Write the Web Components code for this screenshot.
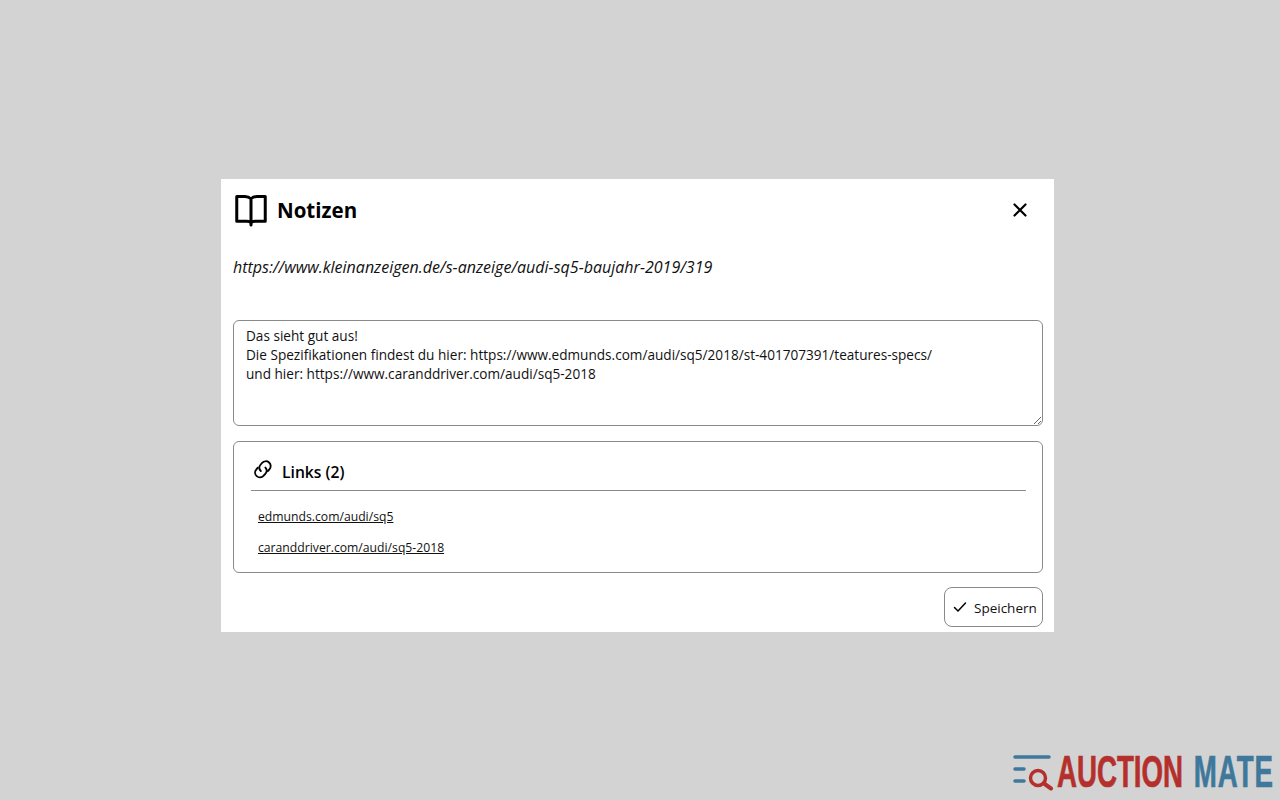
<!DOCTYPE html>
<html lang="de">
<head>
<meta charset="utf-8">
<title>Notizen</title>
<style>
  html, body { margin: 0; height: 100%; }
  body { background: #d3d3d3; font-family: "Open Sans", "Noto Sans", sans-serif; color: #000; overflow: hidden; }
</style>
</head>
<body>
<notes-page>
  <notes-dialog heading="Notizen" source="https://www.kleinanzeigen.de/s-anzeige/audi-sq5-baujahr-2019/319">
    <links-panel heading="Links (2)">
      <a href="#">edmunds.com/audi/sq5</a>
      <a href="#">caranddriver.com/audi/sq5-2018</a>
    </links-panel>
  </notes-dialog>
  <brand-logo></brand-logo>
</notes-page>

<script>
  class NotesPage extends HTMLElement {
    constructor() {
      super();
      this.attachShadow({ mode: 'open' });
      this.shadowRoot.innerHTML = `
        <style>
          :host { display: block; box-sizing: border-box; height: 800px; padding: 179px 0 0 221px; position: relative; }
        </style>
        <slot></slot>
      `;
    }
  }

  class NotesDialog extends HTMLElement {
    constructor() {
      super();
      this.attachShadow({ mode: 'open' });
      this.shadowRoot.innerHTML = `
        <style>
          :host { display: block; box-sizing: border-box; width: 833px; height: 453px; background: #fff; padding: 0 11px 0 12px; font-size: 14px; }
          header { display: flex; align-items: center; height: 62px; }
          header svg.book { width: 36px; height: 36px; margin-right: 8px; }
          h2 { margin: 0; font-size: 20.5px; font-weight: 700; flex: 1; }
          .close { width: 24px; height: 24px; margin-right: 11px; }
          .source { margin: 0; height: 58px; padding-top: 16px; box-sizing: border-box; font-size: 16.05px; font-style: italic; line-height: 20px; color: #111; }
          textarea { display: block; box-sizing: border-box; width: 810px; height: 106px; margin: 21px 0 15px; padding: 5px 12px; border: 1px solid #8a8a8a; border-radius: 6px; font: 13.6px/19px "Open Sans", "Noto Sans", sans-serif; color: #111; outline: none; }
          footer { display: flex; justify-content: flex-end; margin-top: 14px; }
          button { display: flex; align-items: center; gap: 6px; box-sizing: border-box; width: 99px; height: 40px; padding: 2px 5px 0 7px; background: #fff; border: 1px solid #8a8a8a; border-radius: 8px; font: 13.5px "Open Sans", "Noto Sans", sans-serif; color: #111; white-space: nowrap; }
          button svg { width: 16px; height: 16px; flex: none; margin-top: -2px; }
        </style>
        <header>
          <svg class="book" viewBox="0 0 24 24" fill="none" stroke="#000" stroke-width="2" stroke-linejoin="round" stroke-linecap="round">
            <path d="M12 4.500C11 3.600 9.600 3 8 3H2.500v16.500H9c1.600 0 3 .5 3 1.500 0-1 1.400-1.500 3-1.500h6.500V3H16c-1.600 0-3 .6-4 1.500zM12 4.500V22"/>
          </svg>
          <h2></h2>
          <svg class="close" viewBox="0 0 24 24" fill="none" stroke="#000" stroke-width="2.2" stroke-linecap="round">
            <path d="M6.500 6.500l11 11M17.500 6.500l-11 11"/>
          </svg>
        </header>
        <p class="source"></p>
        <textarea spellcheck="false">Das sieht gut aus!
Die Spezifikationen findest du hier: https://www.edmunds.com/audi/sq5/2018/st-401707391/teatures-specs/
und hier: https://www.caranddriver.com/audi/sq5-2018</textarea>
        <slot></slot>
        <footer>
          <button type="button">
            <svg viewBox="0 0 16 16" fill="none" stroke="#000" stroke-width="1.5" stroke-linecap="round" stroke-linejoin="round"><path d="M2.500 8.500l3.500 3.500 7.500-8"/></svg>
            <span>Speichern</span>
          </button>
        </footer>
      `;
    }

    connectedCallback() {
      this.shadowRoot.querySelector('h2').textContent = this.getAttribute('heading');
      this.shadowRoot.querySelector('.source').textContent = this.getAttribute('source');
    }
  }

  class LinksPanel extends HTMLElement {
    constructor() {
      super();
      this.attachShadow({ mode: 'open' });
      this.shadowRoot.innerHTML = `
        <style>
          :host { display: block; box-sizing: border-box; width: 810px; height: 132px; padding: 0 16px 0 17px; border: 1px solid #8a8a8a; border-radius: 6px; }
          .title { display: flex; align-items: center; gap: 6px; height: 49px; padding: 12px 0 0 0; box-sizing: border-box; border-bottom: 1px solid #8a8a8a; font-size: 15.7px; font-weight: 600; }
          .title svg { width: 26px; height: 26px; flex: none; margin: -3px 0 0 -1px; }
          .list { display: flex; flex-direction: column; gap: 12px; padding: 16px 0 0 7px; }
          ::slotted(a) { color: #111; font-size: 12.2px; line-height: 19px; text-decoration: underline; align-self: flex-start; }
        </style>
        <div class="title">
          <svg viewBox="0 0 24 24" fill="none" stroke="#000" stroke-width="1.7" stroke-linecap="round" stroke-linejoin="round">
            <path d="M10 12c-1.800-1.800-1.700-4.200-.1-6l1.200-1.400c1.800-1.900 4.600-2.100 6.500-.4 1.900 1.700 2 4.400.3 6.300l-1.400 1.600"/>
            <path d="M14.200 8.800c1.700 1.800 1.500 4-.1 5.800l-1.500 1.700c-1.800 1.900-4.600 2-6.400.4-1.900-1.700-2-4.400-.3-6.300l1.300-1.500"/>
          </svg>
          <span></span>
        </div>
        <div class="list"><slot></slot></div>
      `;
    }

    connectedCallback() {
      this.shadowRoot.querySelector('.title span').textContent = this.getAttribute('heading');
    }
  }

  class BrandLogo extends HTMLElement {
    constructor() {
      super();
      this.attachShadow({ mode: 'open' });
      this.shadowRoot.innerHTML = `
        <style>
          :host { position: absolute; left: 1012px; top: 752px; display: flex; align-items: center; width: 262px; height: 40px; }
          svg { width: 42px; height: 36px; flex: none; margin-top: 2px; }
          .words { display: block; font: 700 45px/40px "Liberation Sans", sans-serif; white-space: nowrap; transform: scaleX(.615); transform-origin: left center; margin-left: 3px; color: #b5302c; -webkit-text-stroke: .7px currentColor; }
          .mate { color: #3f789b; letter-spacing: 1.5px; margin-left: 5px; }
        </style>
        <svg viewBox="0 0 42 36" fill="none" stroke-linecap="round">
          <path d="M3 2h34M3 14h9M3 26h9" stroke="#3f789b" stroke-width="3.5"/>
          <circle cx="26" cy="23" r="7.5" stroke="#b5302c" stroke-width="3.5"/>
          <path d="M32 28.500l7 5" stroke="#b5302c" stroke-width="4"/>
        </svg>
        <span class="words">AUCTION <span class="mate">MATE</span></span>
      `;
    }
  }

  customElements.define('notes-page', NotesPage);
  customElements.define('notes-dialog', NotesDialog);
  customElements.define('links-panel', LinksPanel);
  customElements.define('brand-logo', BrandLogo);
</script>
</body>
</html>
